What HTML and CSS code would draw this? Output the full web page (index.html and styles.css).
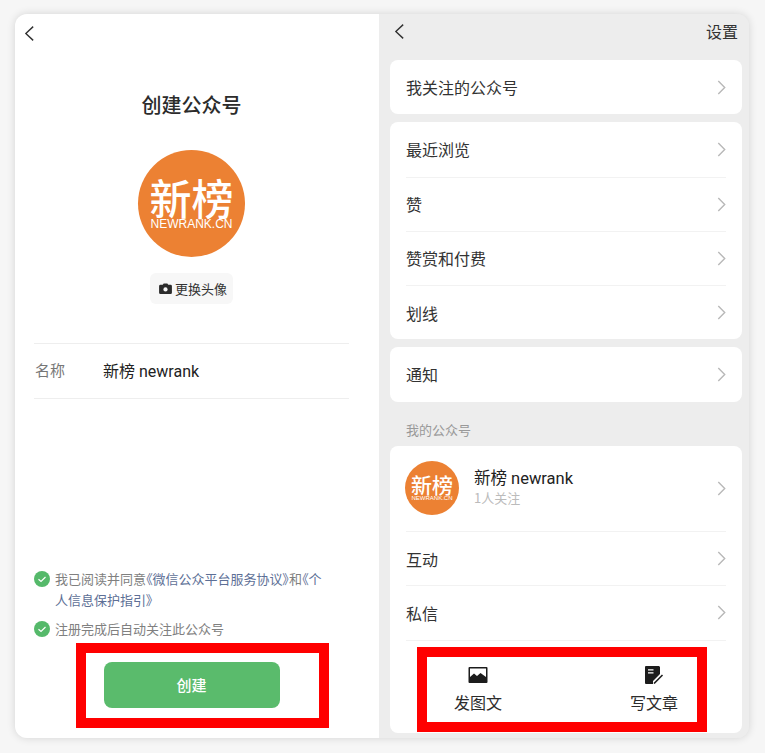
FILE: index.html
```html
<!DOCTYPE html>
<html lang="zh-CN">
<head>
    <meta charset="UTF-8">
    <meta name="viewport" content="width=device-width, initial-scale=1.0">
    <title>创建公众号</title>
    <link rel="stylesheet" href="styles.css">
</head>
<body>
    <div class="frame">
        <section class="create-panel">
            <div class="back-row">
                <svg class="back-icon" viewBox="0 0 12 18"><path d="M10 1.500 2 9l8 7.500"/></svg>
            </div>
            <h1 class="create-title">创建公众号</h1>
            <div class="logo logo-large">
                <span class="logo-cn">新榜</span>
                <span class="logo-en">NEWRANK.CN</span>
            </div>
            <div class="change-avatar">
                <svg class="camera-icon" viewBox="0 0 14 12"><path d="M1.500 2H4L5 .5h4L10 2h2.500A1.500 1.500 0 0 1 14 3.500v7a1.500 1.500 0 0 1-1.500 1.500h-11A1.500 1.500 0 0 1 0 10.500v-7A1.500 1.500 0 0 1 1.500 2Z"/><circle cx="7" cy="7" r="2.300" fill="#f7f7f7"/></svg>
                更换头像
            </div>
            <div class="name-row">
                <span class="name-label">名称</span>
                <span class="name-value">新榜 newrank</span>
            </div>
            <div class="agreements">
                <div class="agree-row">
                    <svg class="check-icon" viewBox="0 0 16 16"><circle cx="8" cy="8" r="8"/><path d="m4.500 8.200 2.500 2.300 4.500-4.500"/></svg>
                    <p>我已阅读并同意<span class="link">《微信公众平台服务协议》</span>和<span class="link">《个</span><br><span class="link">人信息保护指引》</span></p>
                </div>
                <div class="agree-row">
                    <svg class="check-icon" viewBox="0 0 16 16"><circle cx="8" cy="8" r="8"/><path d="m4.500 8.200 2.500 2.300 4.500-4.500"/></svg>
                    <p>注册完成后自动关注此公众号</p>
                </div>
            </div>
            <button class="create-btn">创建</button>
        </section>

        <section class="me-panel">
            <div class="me-nav">
                <svg class="back-icon" viewBox="0 0 12 18"><path d="M10 1.500 2 9l8 7.500"/></svg>
                <span>设置</span>
            </div>

            <div class="card">
                <div class="row"><span>我关注的公众号</span><svg class="chevron" viewBox="0 0 8 14"><path d="m1 1 6 6-6 6"/></svg></div>
            </div>

            <div class="card">
                <div class="row"><span>最近浏览</span><svg class="chevron" viewBox="0 0 8 14"><path d="m1 1 6 6-6 6"/></svg></div>
                <div class="row"><span>赞</span><svg class="chevron" viewBox="0 0 8 14"><path d="m1 1 6 6-6 6"/></svg></div>
                <div class="row"><span>赞赏和付费</span><svg class="chevron" viewBox="0 0 8 14"><path d="m1 1 6 6-6 6"/></svg></div>
                <div class="row"><span>划线</span><svg class="chevron" viewBox="0 0 8 14"><path d="m1 1 6 6-6 6"/></svg></div>
            </div>

            <div class="card">
                <div class="row"><span>通知</span><svg class="chevron" viewBox="0 0 8 14"><path d="m1 1 6 6-6 6"/></svg></div>
            </div>

            <div class="section-label">我的公众号</div>

            <div class="card card-fill">
                <div class="row account-row">
                    <div class="logo logo-small">
                        <span class="logo-cn">新榜</span>
                        <span class="logo-en">NEWRANK.CN</span>
                    </div>
                    <div class="account-info">
                        <div class="account-name">新榜 newrank</div>
                        <div class="account-sub">1人关注</div>
                    </div>
                    <svg class="chevron" viewBox="0 0 8 14"><path d="m1 1 6 6-6 6"/></svg>
                </div>
                <div class="row"><span>互动</span><svg class="chevron" viewBox="0 0 8 14"><path d="m1 1 6 6-6 6"/></svg></div>
                <div class="row"><span>私信</span><svg class="chevron" viewBox="0 0 8 14"><path d="m1 1 6 6-6 6"/></svg></div>
                <div class="actions">
                    <div class="action">
                        <svg class="action-icon" viewBox="0 0 20 18"><path d="M1.500 1h17a1 1 0 0 1 1 1v14a1 1 0 0 1-1 1h-17a1 1 0 0 1-1-1V2a1 1 0 0 1 1-1Zm.5 1.500v8.500L6 7.500l3 2.400 3.500-3 5.500 4V2.500Z" fill-rule="evenodd"/></svg>
                        <span>发图文</span>
                    </div>
                    <div class="action">
                        <svg class="action-icon" viewBox="0 0 18 18"><path d="M1 0h13l1 1v7l-7 7v3H1a1 1 0 0 1-1-1V1a1 1 0 0 1 1-1Zm2 3.200v1.300h5.500V3.200Zm0 3v1.300h5.500V6.200Z" fill-rule="evenodd"/><path d="m9 17.500 8.500-8.500" fill="none" stroke="#1c1c1c" stroke-width="1.600"/></svg>
                        <span>写文章</span>
                    </div>
                </div>
            </div>
        </section>
    </div>

    <div class="red-box red-box-create"></div>
    <div class="red-box red-box-actions"></div>
</body>
</html>
```

FILE: styles.css
```css
* {
    box-sizing: border-box;
}
body {
    margin: 0;
    width: 765px;
    height: 753px;
    padding: 14px 16px 15px 15px;
    position: relative;
    overflow: hidden;
    background-color: #f6f6f6;
    color: #333;
    font-family: "Noto Sans CJK SC", "Noto Sans", sans-serif;
}
.frame {
    display: flex;
    gap: 1px;
    height: 724px;
    border-radius: 12px;
    overflow: hidden;
    background: #ededed;
    box-shadow: 0 0 8px rgba(0, 0, 0, 0.14);
}

/* left: create account */
.create-panel {
    width: 364px;
    background: #fff;
    display: flex;
    flex-direction: column;
    align-items: center;
    padding: 0 30px 30px 19px;
}
.back-row {
    align-self: stretch;
    height: 38px;
    margin-left: -10px;
    padding-top: 11px;
}
.back-icon {
    display: block;
    width: 11px;
    height: 17px;
    fill: none;
    stroke: #333;
    stroke-width: 1.500;
}
.create-title {
    margin: 38px 0 0;
    height: 30px;
    line-height: 30px;
    font-size: 20px;
    font-weight: 500;
    color: #2c2c2c;
}
.logo {
    display: flex;
    flex-direction: column;
    align-items: center;
    justify-content: center;
    flex: none;
    border-radius: 50%;
    background: #ec8133;
    color: #fff;
}
.logo-cn {
    font-weight: 500;
}
.logo-en {
    font-family: "Liberation Sans", sans-serif;
}
.logo-large {
    width: 107px;
    height: 107px;
    margin-top: 30px;
    gap: 3px;
}
.logo-large .logo-cn {
    font-size: 42px;
    line-height: 38px;
}
.logo-large .logo-en {
    font-size: 12px;
    line-height: 11px;
}
.logo-small {
    width: 54px;
    height: 54px;
    gap: 2px;
}
.logo-small .logo-cn {
    font-size: 21px;
    line-height: 19px;
}
.logo-small .logo-en {
    font-size: 6px;
    line-height: 5px;
}
.change-avatar {
    display: flex;
    align-items: center;
    gap: 3px;
    margin-top: 16px;
    width: 83px;
    height: 31px;
    padding-left: 9px;
    border-radius: 6px;
    background: #f7f7f7;
    font-size: 13px;
    white-space: nowrap;
}
.camera-icon {
    width: 13px;
    height: 11px;
    fill: #2c2c2c;
}
.name-row {
    align-self: stretch;
    display: flex;
    align-items: center;
    height: 56px;
    margin-top: 39px;
    padding-bottom: 3px;
    border-top: 1px solid #eee;
    border-bottom: 1px solid #eee;
}
.name-label {
    width: 69px;
    padding-left: 1px;
    font-size: 15px;
    color: #777;
}
.name-value {
    font-family: Roboto, "Noto Sans CJK SC", sans-serif;
    font-size: 16px;
    color: #222;
}
.agreements {
    align-self: stretch;
    margin-top: auto;
    display: flex;
    flex-direction: column;
    gap: 8px;
}
.agree-row {
    display: flex;
    gap: 5px;
    font-size: 13px;
    line-height: 21px;
    color: #808080;
}
.agree-row p {
    margin: 0;
}
.check-icon {
    flex: none;
    width: 16px;
    height: 16px;
    margin-top: 3px;
}
.check-icon circle {
    fill: #55b96a;
}
.check-icon path {
    fill: none;
    stroke: #fff;
    stroke-width: 1.200;
}
.link {
    color: #5d6f96;
    font-feature-settings: "palt";
}
.create-btn {
    width: 176px;
    height: 46px;
    margin-top: 23px;
    padding-bottom: 2px;
    flex: none;
    border: none;
    border-radius: 8px;
    background-color: #5abb6c;
    color: #fff;
    font-family: inherit;
    font-size: 15px;
    font-weight: 500;
}

/* right: my tab */
.me-panel {
    flex: 1;
    min-width: 0;
    display: flex;
    flex-direction: column;
    gap: 8px;
    padding: 0 7px 5px 10px;
    background: #ededed;
}
.me-nav {
    display: flex;
    justify-content: space-between;
    align-items: center;
    height: 38px;
    padding: 0 4px;
    font-size: 16px;
    color: #333;
}
.me-nav .back-icon {
    margin-top: -3px;
}
.me-nav span {
    margin-top: -4px;
}
.card {
    background: #fff;
    border-radius: 8px;
    padding: 0 16px;
}
.card-fill {
    flex: 1;
    display: flex;
    flex-direction: column;
}
.row {
    display: flex;
    align-items: center;
    justify-content: space-between;
    height: 54.250px;
    flex: none;
    font-size: 16px;
    color: #333;
}
.row + .row {
    border-top: 1px solid #f2f2f2;
}
.chevron {
    width: 9px;
    height: 15px;
    fill: none;
    stroke: #b8b8b8;
    stroke-width: 1.300;
}
.section-label {
    height: 28px;
    padding: 12px 0 0 16px;
    font-size: 13px;
    line-height: 16px;
    color: #999;
}
.account-row {
    height: 85.500px;
    justify-content: flex-start;
    margin-left: -1px;
}
.account-row .chevron {
    margin-left: auto;
}
.account-info {
    margin: -3px 0 0 15px;
}
.account-name {
    font-family: Roboto, "Noto Sans CJK SC", sans-serif;
    font-size: 16.500px;
    line-height: 22px;
    color: #222;
}
.account-sub {
    font-size: 13px;
    line-height: 16px;
    color: #bbb;
}
.actions {
    flex: 1;
    display: flex;
    justify-content: space-between;
    padding: 25px 48px 0;
    border-top: 1px solid #f2f2f2;
}
.action {
    display: flex;
    flex-direction: column;
    align-items: center;
    gap: 7px;
    font-size: 16px;
    line-height: 22px;
    color: #2c2c2c;
}
.action-icon {
    width: 20px;
    height: 18px;
    fill: #1c1c1c;
}

/* annotation boxes over the screenshot */
.red-box {
    position: absolute;
    border: 10px solid #ff0000;
}
.red-box-create {
    left: 76px;
    top: 643px;
    width: 253px;
    height: 85px;
}
.red-box-actions {
    left: 417px;
    top: 647px;
    width: 290px;
    height: 85px;
}
```
